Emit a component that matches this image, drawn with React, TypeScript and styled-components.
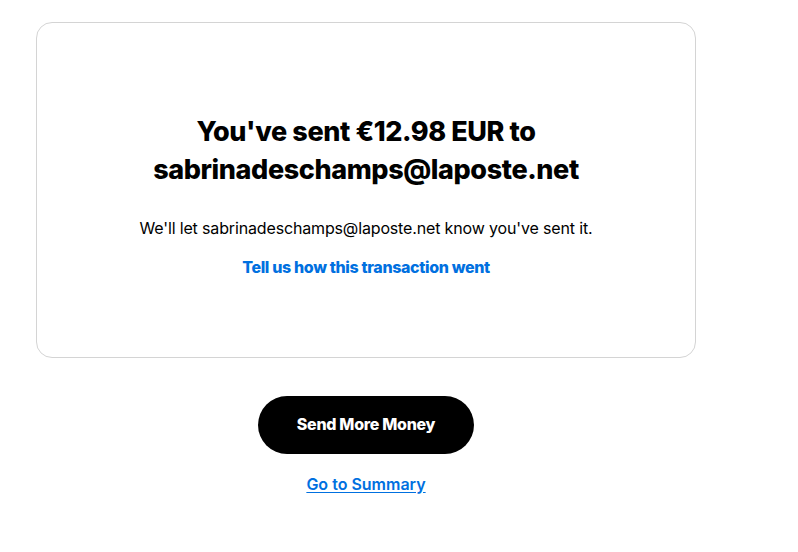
import React from "react";
import styled, { createGlobalStyle } from "styled-components";

const Global = createGlobalStyle`
  html, body { margin: 0; padding: 0; background: #ffffff; }
  body { font-family: Inter, "Liberation Sans", Arial, sans-serif; color: #000; }
`;

const Page = styled.div`
  padding: 22px 0 0 36px;
  width: 660px;
  display: flex;
  flex-direction: column;
  align-items: center;
`;

const Card = styled.section`
  box-sizing: border-box;
  width: 660px;
  height: 336px;
  border: 1px solid #d4d4d4;
  border-radius: 16px;
  display: flex;
  flex-direction: column;
  align-items: center;
  padding-top: 90px;
`;

const Heading = styled.h1`
  margin: 0;
  font-family: Inter, "Noto Sans", sans-serif;
  font-weight: 800;
  font-size: 27px;
  line-height: 38px;
  letter-spacing: -0.4px;
  text-align: center;
  color: #000;
`;

const Message = styled.p`
  margin: 29px 0 0;
  font-family: Inter, "Liberation Sans", Arial, sans-serif;
  font-size: 16px;
  line-height: 20px;
  letter-spacing: -0.15px;
  text-align: center;
`;

const FeedbackLink = styled.a`
  margin-top: 19px;
  font-family: Inter, "Noto Sans", sans-serif;
  font-weight: 800;
  font-size: 16px;
  line-height: 20px;
  color: #0070e0;
  text-decoration: none;
  letter-spacing: -0.35px;
`;

const PrimaryButton = styled.button`
  margin-top: 38px;
  width: 216px;
  height: 58px;
  padding: 0 0 3px;
  border: none;
  border-radius: 29px;
  background: #000;
  color: #fff;
  font-family: Inter, "Noto Sans", sans-serif;
  font-weight: 800;
  font-size: 16px;
  letter-spacing: -0.3px;
  cursor: pointer;
`;

const SummaryLink = styled.a`
  margin-top: 20px;
  font-family: Inter, "Noto Sans", sans-serif;
  font-weight: 600;
  font-size: 16px;
  line-height: 20px;
  color: #0070e0;
  text-decoration: underline;
  text-underline-offset: 2px;
`;

export default function App() {
  return (
    <>
      <Global />
      <Page>
        <Card>
          <Heading>
            You've sent €12.98 EUR to
            <br />
            sabrinadeschamps@laposte.net
          </Heading>
          <Message>We'll let sabrinadeschamps@laposte.net know you've sent it.</Message>
          <FeedbackLink href="#">Tell us how this transaction went</FeedbackLink>
        </Card>
        <PrimaryButton>Send More Money</PrimaryButton>
        <SummaryLink href="#">Go to Summary</SummaryLink>
      </Page>
    </>
  );
}
